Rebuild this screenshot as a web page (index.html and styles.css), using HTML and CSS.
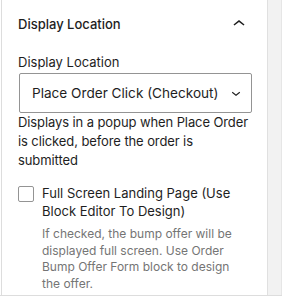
FILE: index.html
```html
<!DOCTYPE HTML>
<html>
    <head>
        <title>Display Location</title>
        <link rel="stylesheet" href="styles.css">
    </head>
    <body>

        <div class="sidebar">

            <div class="panel">

                <div class="panel-header">
                    <span class="panel-title">Display Location</span>
                    <svg class="chevron-up" width="24" height="24" viewBox="0 0 24 24">
                        <path d="M6.5 12.4L12 8l5.5 4.4-.9 1.2L12 10l-4.6 3.6-.9-1.2z"/>
                    </svg>
                </div>

                <div class="panel-body">

                    <label class="field-label">Display Location</label>

                    <div class="select">
                        <span class="select-value">Place Order Click (Checkout)</span>
                        <svg class="chevron-down" width="18" height="18" viewBox="0 0 24 24">
                            <path d="M17.5 11.6L12 16l-5.5-4.4.9-1.2L12 14l4.6-3.6.9 1.2z"/>
                        </svg>
                    </div>

                    <p class="help">Displays in a popup when Place Order is clicked, before the order is submitted</p>

                    <div class="checkbox-row">
                        <span class="checkbox"></span>
                        <div>
                            <label class="checkbox-label">Full Screen Landing Page (Use Block Editor To Design)</label>
                            <p class="checkbox-help">If checked, the bump offer will be displayed full screen. Use Order Bump Offer Form block to design the offer.</p>
                        </div>
                    </div>

                </div>

            </div>

            <div class="track"></div>

        </div>

    </body>
</html>
```

FILE: styles.css
```css
*{
    margin: 0;
    padding: 0;
    box-sizing: border-box;
}

body, html{
    height: 100%;
    background: #fff;
    font-family: Inter, "Noto Sans", sans-serif;
    font-size: 13px;
    color: #1e1e1e;
}

.sidebar{
    display: flex;
    height: 296px;
    border-bottom: 1px solid #ddd;
}

.panel{
    width: 266px;
    margin-left: 1px;
    border-left: 1px solid #ddd;
}

.track{
    width: 15px;
    background: #f2f2f2;
    border-left: 1px solid #e0e0e0;
    border-right: 1px solid #e6e6e6;
}

.panel-header{
    height: 48px;
    display: flex;
    align-items: center;
    justify-content: space-between;
    padding: 0 16px 0 16px;
}

.panel-title{
    font-weight: 500;
}

.chevron-up, .chevron-down{
    flex: none;
    fill: #1e1e1e;
}

.panel-body{
    padding: 0 15px 0 16px;
}

.field-label{
    display: block;
    line-height: 16px;
    margin-top: 6px;
    margin-bottom: 3px;
}

.select{
    display: flex;
    align-items: center;
    justify-content: space-between;
    height: 40px;
    margin-left: 1px;
    padding: 0 6px 0 12px;
    border: 1px solid #949494;
    border-radius: 2px;
    font-size: 13.6px;
    white-space: nowrap;
}

.help{
    line-height: 19px;
    letter-spacing: -0.1px;
}

.checkbox-row{
    display: flex;
    align-items: flex-start;
    margin-top: 14px;
}

.checkbox{
    flex: none;
    width: 16px;
    height: 16px;
    border: 1px solid #949494;
    border-radius: 2px;
    margin-right: 8px;
    margin-top: 2px;
}

.checkbox-label{
    display: block;
    line-height: 18px;
}

.checkbox-help{
    margin-top: 6px;
    padding-right: 8px;
    font-size: 12px;
    line-height: 16.7px;
    color: #757575;
}
```
